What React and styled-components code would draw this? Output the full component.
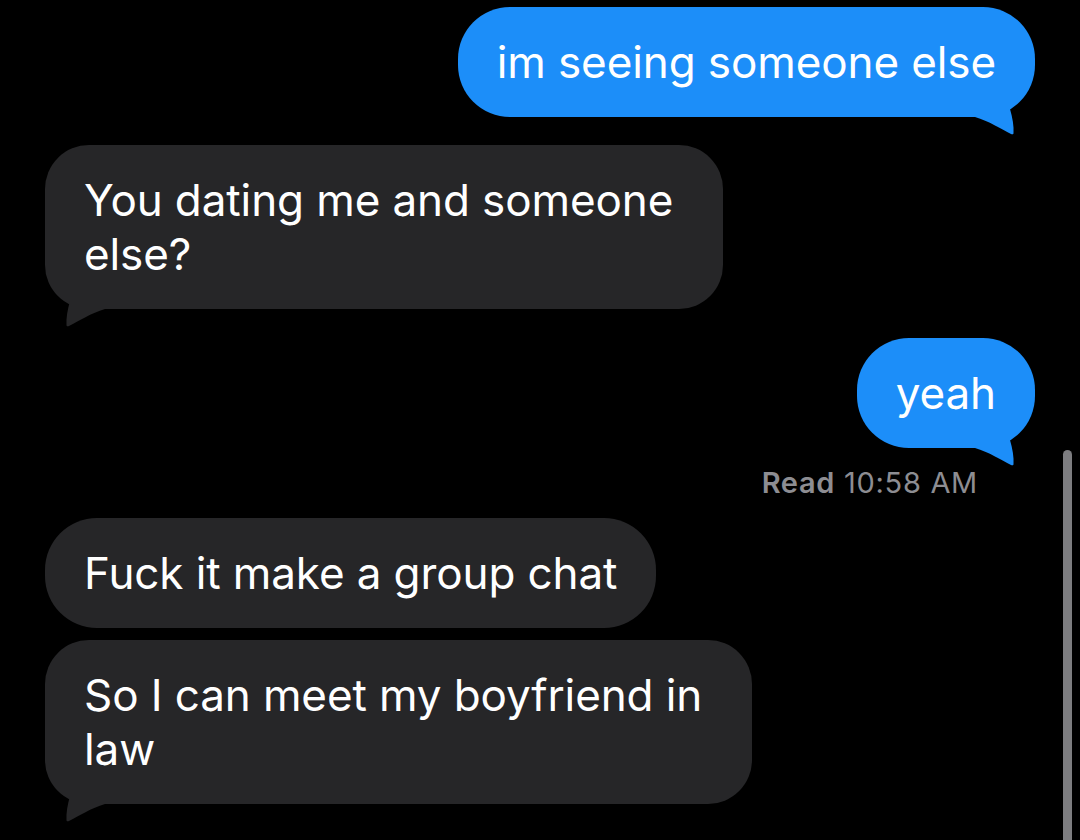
import React from "react";
import styled, { createGlobalStyle } from "styled-components";

const GlobalStyle = createGlobalStyle`
  html, body {
    margin: 0;
    padding: 0;
    background: #000;
  }
  body {
    font-family: Inter, "Liberation Sans", Arial, sans-serif;
  }
`;

const Screen = styled.div`
  position: relative;
  width: 1080px;
  height: 840px;
  overflow: hidden;
  background: #000;
  box-sizing: border-box;
  padding: 7px 45px 0 45px;
  display: flex;
  flex-direction: column;
`;

const Bubble = styled.div`
  position: relative;
  align-self: ${(p) => (p.$out ? "flex-end" : "flex-start")};
  margin-top: ${(p) => p.$gap || 0}px;
  background: ${(p) => (p.$out ? "#1c8ef9" : "#262628")};
  color: #fff;
  font-size: 44px;
  line-height: 54px;
  letter-spacing: -0.1px;
  padding: 28px ${(p) => (p.$multi ? 50 : 39)}px 28px 39px;
  border-radius: ${(p) => (p.$multi ? 44 : 52)}px;
  white-space: nowrap;
`;

const Text = styled.span`
  position: relative;
  z-index: 1;
`;

const TailSvg = styled.svg`
  position: absolute;
  bottom: -18px;
  width: 60px;
  height: 46px;
  ${(p) => (p.$out ? "right: 0;" : "left: 0; transform: scaleX(-1);")}
`;

const Tail = ({ out }) => (
  <TailSvg $out={out} viewBox="0 0 60 46">
    <path
      d="M35 20 C37.5 29 39 37 38.5 44.5 C38 45.5 37 45.5 36 45 C26 40 14 32 0 28 L0 0 L35 0 Z"
      fill={out ? "#1c8ef9" : "#262628"}
    />
  </TailSvg>
);

const Receipt = styled.div`
  align-self: flex-end;
  margin-top: 18px;
  margin-right: 57px;
  font-size: 29px;
  line-height: 34px;
  color: #8d8d92;
  letter-spacing: 0.7px;
`;

const ReadLabel = styled.span`
  font-weight: 600;
`;

const ScrollIndicator = styled.div`
  position: absolute;
  left: 1063px;
  top: 450px;
  width: 9px;
  height: 420px;
  border-radius: 5px;
  background: #7d7d80;
`;

export default function App() {
  return (
    <>
      <GlobalStyle />
      <Screen>
        <Bubble $out>
          <Text>im seeing someone else</Text>
          <Tail out />
        </Bubble>
        <Bubble $gap={28} $multi>
          <Text>
            You dating me and someone
            <br />
            else?
          </Text>
          <Tail />
        </Bubble>
        <Bubble $out $gap={29}>
          <Text>yeah</Text>
          <Tail out />
        </Bubble>
        <Receipt>
          <ReadLabel>Read</ReadLabel> 10:58 AM
        </Receipt>
        <Bubble $gap={18}>
          <Text>Fuck it make a group chat</Text>
        </Bubble>
        <Bubble $gap={12} $multi>
          <Text>
            So I can meet my boyfriend in
            <br />
            law
          </Text>
          <Tail />
        </Bubble>
        <ScrollIndicator />
      </Screen>
    </>
  );
}
